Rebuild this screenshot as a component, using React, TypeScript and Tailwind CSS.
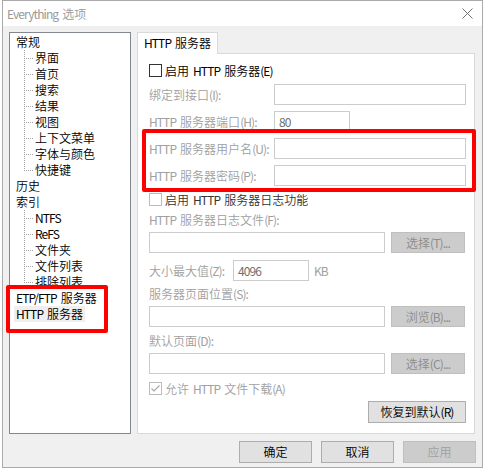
import React from "react";

const F = "font-['Noto_Sans_CJK_SC','Noto_Sans',sans-serif] font-[350]";

function T({ s }: { s: string }) {
  const parts = s.split(/([\x21-\x7E]+| )/);
  return (
    <>
      {parts.map((p, i) =>
        p === "" ? null : p === " " ? (
          <span key={i} className="inline-block w-[4px]" />
        ) : /[\x21-\x7E]/.test(p) ? (
          <span key={i} className="font-normal tracking-[-0.9px]">
            {p}
          </span>
        ) : (
          <React.Fragment key={i}>{p}</React.Fragment>
        )
      )}
    </>
  );
}

function Conn({ last }: { last?: boolean }) {
  return (
    <svg width="11" height="16" className="shrink-0" shapeRendering="crispEdges">
      <line x1="0.5" y1="0" x2="0.5" y2={last ? 9 : 16} stroke="#a0a0a0" strokeDasharray="1 1" />
      <line x1="2" y1="8.5" x2="10" y2="8.5" stroke="#a0a0a0" strokeDasharray="1 1" />
    </svg>
  );
}

function Top({ s, selected }: { s: string; selected?: boolean }) {
  return (
    <div className="h-[16px] leading-[16px] pl-[6px] text-black whitespace-pre">
      {selected ? (
        <span className="bg-[#efefef] px-[2px] -ml-[2px] inline-block h-[16px]">
          <T s={s} />
        </span>
      ) : (
        <T s={s} />
      )}
    </div>
  );
}

function Child({ s, last }: { s: string; last?: boolean }) {
  return (
    <div className="h-[16px] leading-[16px] pl-[14px] flex items-center text-black whitespace-pre">
      <Conn last={last} />
      <span>
        <T s={s} />
      </span>
    </div>
  );
}

function Box({ w, value }: { w: string; value?: string }) {
  return (
    <div className={`${w} h-[21px] border border-[#cccccc] bg-white leading-[19px] pl-[4px] text-[#6d6d6d]`}>
      {value ? <T s={value} /> : null}
    </div>
  );
}

function DisBtn({ s }: { s: string }) {
  return (
    <div className="w-[74px] h-[21px] border border-[#bfbfbf] bg-[#cccccc] text-[#8c8c8c] flex items-center justify-center leading-[19px] whitespace-pre">
      <T s={s} />
    </div>
  );
}

function LabelRow({ label, w, value, mt }: { label: string; w: string; value?: string; mt: string }) {
  return (
    <div className={`flex items-center h-[21px] ${mt}`}>
      <span className="w-[125px] text-[#a0a0a0] whitespace-pre">
        <T s={label} />
      </span>
      <Box w={w} value={value} />
    </div>
  );
}

export default function App() {
  return (
    <div className={`relative w-[486px] h-[472px] bg-white text-[12px] ${F}`}>
      <div className="ml-[2px] w-[481px] h-[468px] border border-[#aaaaaa] bg-[#f0f0f0] flex flex-col">
        {/* Title bar */}
        <div className="h-[25px] bg-white flex items-center justify-between pl-[4px] pr-[9px]">
          <span className="text-[#999999] text-[12px] leading-[16px] whitespace-pre">
            <T s="Everything 选项" />
          </span>
          <svg width="11" height="11" viewBox="0 0 11 11">
            <path d="M0.5 0.5 L10.5 10.5 M10.5 0.5 L0.5 10.5" stroke="#707070" strokeWidth="1" />
          </svg>
        </div>
        {/* Body */}
        <div className="flex flex-col pl-[6px] pt-[6px]">
          <div className="flex items-start gap-[6px]">
            {/* Tree */}
            <div className="w-[122px] h-[402px] border border-[#828790] bg-white pt-px">
              <Top s="常规" />
              <Child s="界面" />
              <Child s="首页" />
              <Child s="搜索" />
              <Child s="结果" />
              <Child s="视图" />
              <Child s="上下文菜单" />
              <Child s="字体与颜色" />
              <Child s="快捷键" last />
              <Top s="历史" />
              <Top s="索引" />
              <Child s="NTFS" />
              <Child s="ReFS" />
              <Child s="文件夹" />
              <Child s="文件列表" />
              <Child s="排除列表" last />
              <Top s="ETP/FTP 服务器" />
              <Top s="HTTP 服务器" selected />
            </div>
            {/* Tabs */}
            <div className="w-[338px] flex flex-col">
              <div className="relative z-10 -mb-px w-[81px] h-[22px] border-l border-t border-r border-[#d9d9d9] bg-white pl-[6px] leading-[19px] text-black whitespace-pre">
                <T s="HTTP 服务器" />
              </div>
              <div className="h-[381px] border border-[#d9d9d9] bg-white pl-[11px] pr-[8px] pt-[10px] flex flex-col">
                <div className="flex items-center h-[13px]">
                  <div className="w-[13px] h-[13px] border border-[#333333] bg-white" />
                  <span className="ml-[3px] text-black leading-[16px] whitespace-pre">
                    <T s="启用 HTTP 服务器(E)" />
                  </span>
                </div>
                <LabelRow label="绑定到接口(I):" w="w-[192px]" mt="mt-[7px]" />
                <LabelRow label="HTTP 服务器端口(H):" w="w-[76px]" value="80" mt="mt-[6px]" />
                <LabelRow label="HTTP 服务器用户名(U):" w="w-[192px]" mt="mt-[6px]" />
                <LabelRow label="HTTP 服务器密码(P):" w="w-[192px]" mt="mt-[6px]" />
                <div className="flex items-center h-[13px] mt-[7px]">
                  <div className="w-[13px] h-[13px] border border-[#bcbcbc] bg-white" />
                  <span className="ml-[3px] text-[#333333] leading-[16px] whitespace-pre">
                    <T s="启用 HTTP 服务器日志功能" />
                  </span>
                </div>
                <div className="h-[16px] leading-[16px] mt-[6px] text-[#a0a0a0] whitespace-pre">
                  <T s="HTTP 服务器日志文件(F):" />
                </div>
                <div className="flex items-center gap-[6px] mt-[4px]">
                  <Box w="w-[236px]" />
                  <DisBtn s="选择(T)..." />
                </div>
                <div className="flex items-center h-[21px] mt-[7px]">
                  <span className="w-[84px] text-[#a0a0a0] whitespace-pre">
                    <T s="大小最大值(Z):" />
                  </span>
                  <Box w="w-[76px]" value="4096" />
                  <span className="ml-[5px] text-[#a0a0a0]">
                    <T s="KB" />
                  </span>
                </div>
                <div className="h-[16px] leading-[16px] mt-[5px] text-[#a0a0a0] whitespace-pre">
                  <T s="服务器页面位置(S):" />
                </div>
                <div className="flex items-center gap-[6px] mt-[4px]">
                  <Box w="w-[236px]" />
                  <DisBtn s="浏览(B)..." />
                </div>
                <div className="h-[16px] leading-[16px] mt-[6px] text-[#a0a0a0] whitespace-pre">
                  <T s="默认页面(D):" />
                </div>
                <div className="flex items-center gap-[6px] mt-[4px]">
                  <Box w="w-[236px]" />
                  <DisBtn s="选择(C)..." />
                </div>
                <div className="flex items-center h-[13px] mt-[8px]">
                  <div className="w-[13px] h-[13px] border border-[#bcbcbc] bg-white flex items-center justify-center">
                    <svg width="11" height="11" viewBox="0 0 11 11">
                      <path d="M1.5 5.5 L4 8 L9.5 2.5" stroke="#a8a8a8" strokeWidth="1.2" fill="none" />
                    </svg>
                  </div>
                  <span className="ml-[3px] text-[#a0a0a0] leading-[16px] whitespace-pre">
                    <T s="允许 HTTP 文件下载(A)" />
                  </span>
                </div>
                <div className="flex justify-end mt-[6px]">
                  <div className="w-[98px] h-[22px] border border-[#adadad] bg-[#e1e1e1] text-black flex items-center justify-center leading-[20px] whitespace-pre">
                    <T s="恢复到默认(R)" />
                  </div>
                </div>
              </div>
            </div>
          </div>
          {/* Bottom buttons */}
          <div className="flex justify-end gap-[9px] mt-[7px] pr-[6px]">
            <div className="w-[73px] h-[22px] border border-[#adadad] bg-[#e1e1e1] text-black flex items-center justify-center">确定</div>
            <div className="w-[73px] h-[22px] border border-[#adadad] bg-[#e1e1e1] text-black flex items-center justify-center">取消</div>
            <div className="w-[73px] h-[22px] border border-[#bfbfbf] bg-[#cccccc] text-[#a0a0a0] flex items-center justify-center">应用</div>
          </div>
        </div>
      </div>
      {/* Red highlight boxes */}
      <div className="absolute left-[6px] top-[285px] w-[102px] h-[48px] border-4 border-[#ff0000] rounded-[2px] pointer-events-none" />
      <div className="absolute left-[142px] top-[129px] w-[334px] h-[63px] border-4 border-[#ff0000] rounded-[2px] pointer-events-none" />
    </div>
  );
}
